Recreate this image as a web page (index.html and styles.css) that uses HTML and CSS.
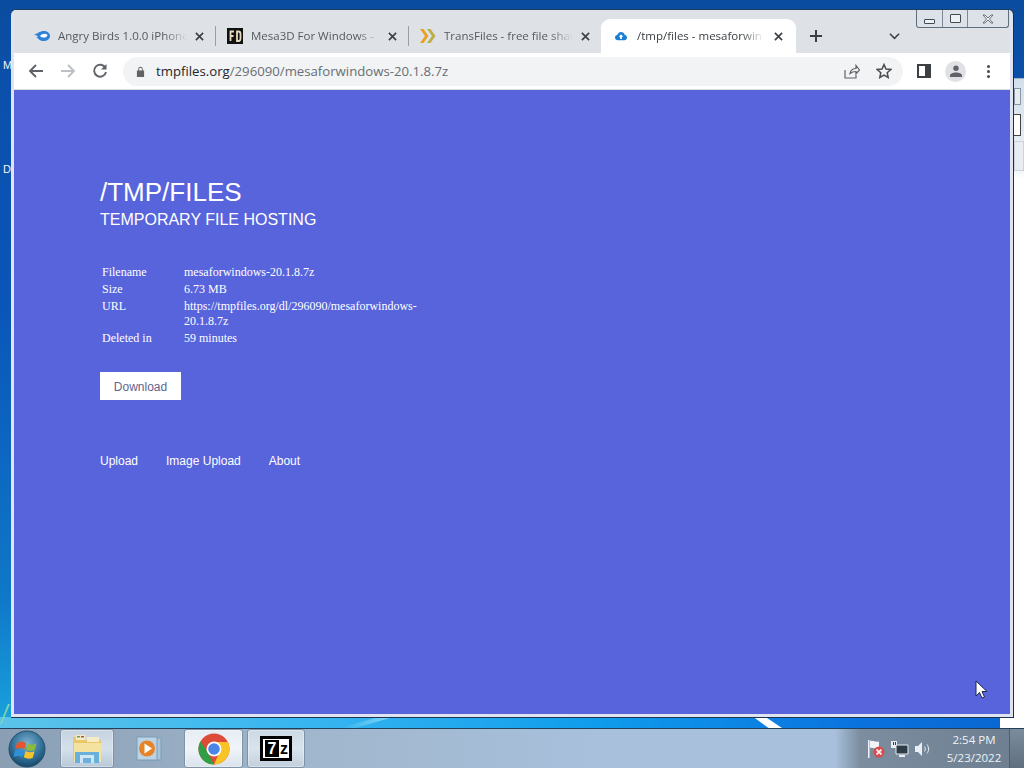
FILE: index.html
```html
<!DOCTYPE html>
<html lang="en">
<head>
<meta charset="utf-8">
<title>/tmp/files - mesaforwindows-20.1.8.7z</title>
<link rel="stylesheet" href="styles.css">
</head>
<body>
<div class="desktop">
  <span class="desk-label label-m">M</span>
  <span class="desk-label label-d">D</span>
  <div class="back-window">
    <span class="back-field back-a"></span>
    <span class="back-field back-b"></span>
    <span class="back-field back-c"></span>
  </div>
  <div class="glow"></div>
  <div class="streak-left"></div>
  <div class="streak"></div>

  <main class="window">
    <div class="tabstrip">
      <div class="tab tab-first">
        <svg class="favicon" viewBox="0 0 16 16"><path fill="#2f80d8" d="M0 6.200c1.800-.1 3-.6 4.500-1.600C6 3.500 8 3 10 3c3.500 0 6 2.200 6 5s-2.500 5-6 5c-2.500 0-4.500-.8-5.800-2.300C3.500 10 3 9.500 2.200 9.300 3 9 3.500 8.800 4 8.400 2.800 7.600 1.500 6.800 0 6.200z"/><path fill="#fff" d="M6 8c1.200-1.500 2.700-2.200 4.500-2.200 1.300 0 2.300.4 3 1.200-.2 1.500-1.500 2.600-3.500 2.600C8.500 9.600 7 9 6 8z"/></svg>
        <span class="tab-title">Angry Birds 1.0.0 iPhone</span>
        <svg class="tab-close" viewBox="0 0 10 10"><path d="M1 1l8 8M9 1l-8 8"/></svg>
      </div>
      <i class="tab-sep"></i>
      <div class="tab">
        <svg class="favicon" viewBox="0 0 16 16"><rect width="16" height="16" fill="#111"/><path fill="none" stroke="#e8dcc0" stroke-width="1.800" d="M3.500 13V3.500H7M3.500 8H6.500M10 3.500v9.500h1.500c1.500 0 2-1 2-2.500v-4.500c0-1.500-.5-2.500-2-2.500z"/></svg>
        <span class="tab-title">Mesa3D For Windows -</span>
        <svg class="tab-close" viewBox="0 0 10 10"><path d="M1 1l8 8M9 1l-8 8"/></svg>
      </div>
      <i class="tab-sep"></i>
      <div class="tab">
        <svg class="favicon" viewBox="0 0 16 16"><path fill="#e8a020" d="M0 1h3.500l5 7-5 7H0l5-7z"/><path fill="#b9b04a" d="M7 1h3.500l5 7-5 7H7l5-7z"/></svg>
        <span class="tab-title">TransFiles - free file shar</span>
        <svg class="tab-close" viewBox="0 0 10 10"><path d="M1 1l8 8M9 1l-8 8"/></svg>
      </div>
      <div class="tab tab-active">
        <svg class="favicon favicon-cloud" viewBox="0 0 16 12"><path fill="#1a7fd4" d="M4 11.500C1.500 11.500 0 10 0 8c0-1.800 1.300-3 3-3.200C3.600 2.300 5.700.5 8 .5c2.600 0 4.500 1.700 5 4.200 1.700.2 3 1.500 3 3.300 0 2-1.500 3.500-3.500 3.500z"/><path fill="#fff" d="M8 3.500l3 3.500H9.200v3H6.800V7H5z"/></svg>
        <span class="tab-title">/tmp/files - mesaforwin</span>
        <svg class="tab-close" viewBox="0 0 10 10"><path d="M1 1l8 8M9 1l-8 8"/></svg>
      </div>
      <svg class="new-tab" viewBox="0 0 12 12"><path d="M6 0v12M0 6h12"/></svg>
      <svg class="tab-menu" viewBox="0 0 12 8"><path d="M1 1.500l5 5 5-5"/></svg>
      <div class="win-controls">
        <span class="win-btn win-min"><i></i></span>
        <span class="win-btn win-max"><i></i></span>
        <span class="win-btn win-close">
          <svg viewBox="0 0 14 10"><path d="M2 1h2l3 3 3-3h2L8.500 5 12 9h-2L7 6 4 9H2l3.500-4z"/></svg>
        </span>
      </div>
    </div>

    <div class="toolbar">
      <svg class="nav-icon" viewBox="0 0 16 16"><path d="M15 8H2M8 2L2 8l6 6"/></svg>
      <svg class="nav-icon nav-off" viewBox="0 0 16 16"><path d="M1 8h13M8 2l6 6-6 6"/></svg>
      <svg class="nav-icon nav-reload" viewBox="0 0 16 16"><path d="M13.500 5A6 6 0 1 0 14 9"/><path class="solid" d="M14.500 1v5.500H9z"/></svg>
      <div class="omnibox">
        <svg class="lock" viewBox="0 0 10 12"><path d="M1 5h8v7H1z M2.500 5V3.200a2.500 2.500 0 0 1 5 0V5H6.500V3.200a1.500 1.500 0 0 0-3 0V5z"/></svg>
        <span class="url"><b>tmpfiles.org</b>/296090/mesaforwindows-20.1.8.7z</span>
        <svg class="omni-icon share" viewBox="0 0 16 15"><path d="M1 6v8h11v-3M6 9.500c.5-3 3-5 6-5V1.500L15.500 6 12 10V7.500c-2.500 0-4.500.7-6 2z"/></svg>
        <svg class="omni-icon star" viewBox="0 0 16 16"><path d="M8 1.500l2 4.500 4.800.5-3.600 3.200 1 4.800L8 12.100l-4.200 2.400 1-4.800L1.200 6.500 6 6z"/></svg>
      </div>
      <svg class="side-panel" viewBox="0 0 14 14"><path fill-rule="evenodd" d="M0 0h14v14H0zM2 2v10h6V2z"/></svg>
      <span class="avatar">
        <svg viewBox="0 0 12 12"><circle cx="6" cy="3.300" r="2.700"/><path d="M0 12v-1.500C0 8.500 3 7.500 6 7.500s6 1 6 3V12z"/></svg>
      </span>
      <span class="kebab"><i></i><i></i><i></i></span>
    </div>

    <div class="page">
      <h1 class="site-title">/TMP/FILES</h1>
      <h2 class="site-sub">TEMPORARY FILE HOSTING</h2>
      <table class="info">
        <tr><th>Filename</th><td>mesaforwindows-20.1.8.7z</td></tr>
        <tr><th>Size</th><td>6.73 MB</td></tr>
        <tr><th>URL</th><td>https://tmpfiles.org/dl/296090/mesaforwindows-20.1.8.7z</td></tr>
        <tr><th>Deleted in</th><td>59 minutes</td></tr>
      </table>
      <a class="download">Download</a>
      <nav class="links"><a>Upload</a><a>Image Upload</a><a>About</a></nav>
    </div>
  </main>

  <footer class="taskbar">
    <svg class="start" viewBox="0 0 38 38">
      <defs>
        <radialGradient id="orb" cx="50%" cy="35%" r="70%"><stop offset="0" stop-color="#7fb0d0"/><stop offset=".6" stop-color="#2f6f96"/><stop offset="1" stop-color="#123f60"/></radialGradient>
      </defs>
      <circle cx="19" cy="19" r="18" fill="url(#orb)" stroke="#24506c"/>
      <path fill="#e2572b" d="M9 13c3-2 6-2 9 0l-1.500 6c-3-1.500-6-1.500-9.500 0z"/>
      <path fill="#8bbb3a" d="M19.500 13.500c3 1.500 6 1.500 9 0l-1.800 6.500c-3 1.300-6 1.200-8.700-.5z"/>
      <path fill="#2f8fd8" d="M7 20.500c3-1.500 6-1.500 9 0l-1.500 6.500c-3-1.500-6-1.500-9 0z"/>
      <path fill="#f4c430" d="M17.500 21c3 1.500 6 1.500 9 .3l-1.700 6.500c-3 1.300-6 1.200-9-.5z"/>
    </svg>
    <div class="task-btn task-folder">
      <svg viewBox="0 0 32 30"><path fill="#e8c868" d="M2 3h10l2 3h16v22H2z"/><path fill="#f4e3a0" d="M3 9h27v19H3z"/><rect x="5" y="1" width="9" height="5" fill="#f5ecc6"/><rect x="16" y="3" width="12" height="5" fill="#f5ecc6"/><rect x="6" y="2" width="3" height="1.500" fill="#66a050"/><rect x="10" y="2" width="3" height="1.500" fill="#b05040"/><path fill="#6ab0dc" d="M4 18h24v11H4z"/><path fill="#cfe6f4" d="M9 21h14v8h-3v-5h-8v5H9z"/></svg>
    </div>
    <div class="task-plain">
      <svg viewBox="0 0 28 28"><rect x="6" y="3" width="20" height="22" fill="#a9c4da" stroke="#7d9db8"/><rect x="2" y="2" width="20" height="23" fill="#bcd3e6" stroke="#7d9db8"/><circle cx="12" cy="13.500" r="8" fill="#e88428"/><path fill="#fff" d="M9.500 8.500l7.500 5-7.500 5z"/></svg>
    </div>
    <div class="task-btn task-chrome">
      <svg viewBox="0 0 32 32"><circle cx="16" cy="16" r="15.500" fill="#dd4b39"/><path fill="#2f9e44" d="M16 31.500A15.500 15.500 0 0 1 2.600 8.200L10 20l6 11.500z"/><path fill="#f7c325" d="M16 31.500A15.500 15.500 0 0 0 29.900 9H16l5 11z"/><circle cx="16" cy="16" r="7.500" fill="#fff"/><circle cx="16" cy="16" r="5.800" fill="#4a86e8"/></svg>
    </div>
    <div class="task-btn task-7z"><span class="sz"><b>7</b><em>z</em></span></div>
    <div class="tray">
      <svg class="tray-flag" viewBox="0 0 18 18"><path fill="#f0f4f8" d="M1 0h1.500v18H1zM3 1c3-1 5 1.500 9 .5v7c-4 1-6-1.500-9-.5z"/><circle cx="12" cy="12" r="5.500" fill="#d84a4a"/><path stroke="#fbe8e8" stroke-width="1.800" d="M9.500 9.500l5 5M14.500 9.500l-5 5"/></svg>
      <svg class="tray-net" viewBox="0 0 18 18"><path fill="#e8eef4" d="M0 1h6v7H0z"/><path fill="#2e3c48" d="M2 2h1v3H2zM4 2h1v3H4z"/><path fill="#2e3c48" stroke="#e8eef4" d="M5 5h12v9H5z"/><path fill="#e8eef4" d="M8 15h6v2H8z"/></svg>
      <svg class="tray-vol" viewBox="0 0 18 18"><path fill="#e8eef4" d="M1 6h3l4-4v14l-4-4H1z"/><path fill="none" stroke="#e8eef4" d="M10.500 6.500c1 1.500 1 3.500 0 5M13 4.500c2 2.500 2 6.500 0 9"/></svg>
      <div class="clock"><span>2:54 PM</span><span>5/23/2022</span></div>
      <div class="show-desktop"></div>
    </div>
  </footer>

  <svg class="cursor" viewBox="0 0 13 19"><path d="M1 1v15l3.500-3.500 2.500 5.500 2.500-1-2.500-5.500H12z"/></svg>
</div>
</body>
</html>
```

FILE: styles.css
```css
* { box-sizing: border-box; }
html, body { margin: 0; padding: 0; }
body { width: 1024px; height: 768px; overflow: hidden; background: #0a4fa8; }

.desktop {
  position: relative;
  width: 1024px;
  height: 768px;
  overflow: hidden;
  background:
    linear-gradient(90deg, #5cc4ea 0, #38b6f0 300px, #0f9cec 600px, #0a72de 860px, #0a66d0 1024px) 0 717px / 100% 11px no-repeat,
    linear-gradient(180deg, #0a4c9e 0, #0b50ac 90px, #0a55b8 300px, #0f78c8 600px, #19a0dc 717px);
}
.desk-label {
  position: absolute;
  left: 3px;
  font: 11px "Liberation Sans", sans-serif;
  color: #f2f6fb;
}
.label-m { top: 59px; }
.label-d { top: 163px; }

.back-window {
  position: absolute;
  left: 1000px;
  top: 78px;
  width: 24px;
  height: 650px;
  background: linear-gradient(180deg, #d2dfeb 0, #eef3f8 90px, #fff 100px);
  border-top: 1px solid #9fb3c6;
}
.back-field { position: absolute; display: block; right: 0; }
.back-a { top: 9px; left: 14px; width: 7px; height: 17px; background: #e6ebf0; border: 1px solid #8a97a4; }
.back-b { top: 35px; left: 13px; width: 8px; height: 22px; background: #fff; border: 1px solid #444; }
.back-c { top: 62px; left: 14px; width: 10px; height: 30px; background: #e9edf1; border: 1px solid #ccd3da; }

.glow {
  position: absolute;
  left: 340px;
  top: 718px;
  width: 50px;
  height: 10px;
  background: linear-gradient(90deg, transparent, #7fd4f4);
  clip-path: polygon(0 100%, 70% 0, 100% 0, 30% 100%);
}
.streak-left {
  position: absolute;
  left: 0;
  top: 704px;
  width: 10px;
  height: 20px;
  background: #7fd8a8;
  clip-path: polygon(80% 0, 100% 0, 15% 100%, 0 100%);
}
.streak {
  position: absolute;
  left: 752px;
  top: 717px;
  width: 30px;
  height: 11px;
  background: #fff;
  clip-path: polygon(5% 0, 45% 0, 100% 100%, 55% 100%);
}

.window {
  position: absolute;
  left: 11px;
  top: 10px;
  width: 1003px;
  height: 708px;
  display: flex;
  flex-direction: column;
  padding: 0 3px 3px;
  background: #dfe4f0;
  border-radius: 5px 5px 0 0;
  border-right: 1px solid #1c2e3f;
  border-bottom: 1px solid #1c3550;
  box-shadow: 0 -1px 0 #1d3d63;
}

.tabstrip {
  position: relative;
  height: 43px;
  flex: none;
  display: flex;
  align-items: flex-end;
  padding-top: 9px;
  background: #dee1e6;
  font: 11.500px "Open Sans", "Noto Sans", sans-serif;
}
.tab {
  position: relative;
  width: 192px;
  height: 34px;
  flex: none;
  display: flex;
  align-items: center;
  gap: 8px;
  padding: 0 11px 0 11px;
  color: #555a60;
}
.tab-first { width: 201px; padding-left: 20px; }
.tab-title {
  flex: 1;
  min-width: 0;
  margin-top: -2px;
  white-space: nowrap;
  -webkit-mask-image: linear-gradient(90deg, #000 82%, transparent 100%);
  mask-image: linear-gradient(90deg, #000 82%, transparent 100%);
}
.favicon { width: 16px; height: 16px; flex: none; }
.favicon-cloud { height: 10px; width: 12px; margin-left: 0; }
.tab-close { width: 9px; height: 9px; flex: none; }
.tab-close path { stroke: #3c4043; stroke-width: 1.800; fill: none; }
.tab-sep { width: 1px; height: 20px; margin-bottom: 7px; background: #9a9da2; flex: none; }
.tab-active {
  width: 195px;
  padding: 0 13px 0 14px;
  gap: 10px;
  background: #fff;
  border-radius: 9px 9px 0 0;
  color: #3c4043;
}
.new-tab { width: 12px; height: 12px; margin: 0 0 11px 14px; flex: none; }
.new-tab path { stroke: #3c4043; stroke-width: 2; fill: none; }
.tab-menu { width: 11px; height: 8px; margin: 0 0 13px 67px; flex: none; }
.tab-menu path { stroke: #3c4043; stroke-width: 1.700; fill: none; }

.win-controls {
  position: absolute;
  right: 1px;
  top: 0;
  width: 93px;
  height: 18px;
  display: flex;
  border: 1px solid #5f6e7c;
  border-top: 0;
  border-radius: 0 0 3px 3px;
  background: #dde2e8;
}
.win-btn { flex: 1; display: flex; align-items: center; justify-content: center; border-left: 1px solid #7d8a96; }
.win-btn:first-child { border-left: 0; }
.win-max, .win-min { flex: 0 0 25px; }
.win-min i { width: 11px; height: 5px; margin-top: 6px; border: 1px solid #3f4a55; border-radius: 1px; background: #eef1f4; }
.win-max i { width: 11px; height: 9px; border: 1.500px solid #3f4a55; border-radius: 1px; background: #eef1f4; }
.win-close svg { width: 14px; height: 10px; }
.win-close path { fill: #eef1f4; stroke: #4a5560; stroke-width: .8; }

.toolbar {
  height: 37px;
  flex: none;
  display: flex;
  align-items: center;
  padding: 0 0 0 14px;
  background: #fff;
  border-bottom: 1px solid #d9dce0;
}
.nav-icon { width: 16px; height: 16px; flex: none; margin-right: 16px; }
.nav-icon path { fill: none; stroke: #5f6368; stroke-width: 1.900; }
.nav-icon .solid { fill: #5f6368; stroke: none; }
.nav-off path { stroke: #bcbfc3; }
.nav-reload { margin-right: 15px; }
.omnibox {
  width: 780px;
  height: 29px;
  flex: none;
  display: flex;
  align-items: center;
  padding: 0 11px 0 13px;
  border-radius: 15px;
  background: #f1f3f4;
  font: 13.200px "Open Sans", "Noto Sans", sans-serif;
}
.lock { width: 9px; height: 11px; flex: none; margin-right: 11px; }
.lock path { fill: #5f6368; }
.url { flex: 1; color: #6a6e73; white-space: nowrap; }
.url b { font-weight: 400; color: #24272a; }
.omni-icon { flex: none; }
.omni-icon path { fill: none; stroke: #5f6368; stroke-width: 1.200; }
.share { width: 16px; height: 15px; margin-right: 16px; }
.star { width: 16px; height: 16px; }
.star path { stroke: #4a4e52; stroke-width: 1.500; }
.side-panel { width: 14px; height: 14px; flex: none; margin-left: 14px; }
.side-panel path { fill: #3c4043; }
.avatar {
  width: 21px;
  height: 21px;
  flex: none;
  margin-left: 14px;
  display: flex;
  align-items: center;
  justify-content: center;
  border-radius: 50%;
  background: #dfe1e5;
}
.avatar svg { width: 12px; height: 12px; }
.avatar path, .avatar circle { fill: #5f6368; }
.kebab { display: flex; flex-direction: column; gap: 2px; flex: none; margin-left: 21px; }
.kebab i { width: 3px; height: 3px; border-radius: 50%; background: #45494d; }

.page {
  flex: 1;
  min-height: 0;
  padding: 87px 0 0 86px;
  background: #5864dc;
  color: #fff;
  font-family: "Liberation Sans", Arial, sans-serif;
}
.site-title { margin: 0; font-size: 26px; line-height: 30px; font-weight: 400; }
.site-sub { margin: 1px 0 32px; font-size: 16px; line-height: 24px; font-weight: 400; }
.info {
  width: 328px;
  border-collapse: collapse;
  font: 12px/15px "Liberation Serif", "Times New Roman", serif;
}
.info th, .info td { padding: 1px 2px; vertical-align: top; text-align: left; font-weight: 400; }
.info th { width: 82px; }
.download {
  display: block;
  width: 81px;
  height: 28px;
  margin-top: 25px;
  background: #fff;
  color: #63648e;
  font-size: 12px;
  line-height: 30px;
  text-align: center;
}
.links { display: flex; gap: 28px; margin-top: 53px; font-size: 12px; line-height: 16px; }

.taskbar {
  position: absolute;
  left: 0;
  right: 0;
  bottom: 0;
  height: 40px;
  display: flex;
  align-items: stretch;
  border-top: 1px solid #20405c;
  background: linear-gradient(90deg, #8a9fb4 0, #a0b6cc 300px, #a8c0dc 600px, #a8c0dc 835px, #7b8d9f 860px, #6e8092 1000px);
}
.start { width: 38px; height: 38px; margin: 0 14px 0 8px; flex: none; align-self: center; }
.task-btn {
  width: 59px;
  flex: none;
  display: flex;
  align-items: center;
  justify-content: center;
  border: 1px solid #7f93a6;
  border-radius: 3px;
  background: linear-gradient(180deg, #c5d3e0 0, #d5e0ea 50%, #b9c9d8 100%);
  box-shadow: inset 0 0 0 1px rgba(255,255,255,.35);
}
.task-folder { width: 54px; }
.task-folder svg { width: 32px; height: 30px; }
.task-plain { width: 70px; flex: none; display: flex; align-items: center; justify-content: center; }
.task-plain svg { width: 28px; height: 28px; }
.task-chrome { margin-right: 4px; background: linear-gradient(180deg, #e6edf3 0, #f0f4f8 50%, #d9e3ec 100%); }
.task-chrome svg { width: 32px; height: 32px; }
.task-7z { width: 58px; background: linear-gradient(180deg, #cdd9e4 0, #d9e3ec 50%, #c2d0dd 100%); }
.sz {
  width: 32px;
  height: 25px;
  display: flex;
  align-items: center;
  padding-left: 2px;
  background: #fff;
  border: 3px solid #000;
  font: 700 16px/1 "Liberation Sans", sans-serif;
  color: #000;
}
.sz b { width: 14px; height: 17px; background: #000; color: #fff; text-align: center; line-height: 17px; }
.sz em { font-style: normal; margin-left: 1px; }

.tray { flex: 1; display: flex; align-items: center; justify-content: flex-end; }
.tray-flag { width: 18px; height: 18px; margin-right: 6px; }
.tray-net { width: 18px; height: 18px; margin-right: 5px; }
.tray-vol { width: 18px; height: 18px; margin-right: 7px; }
.clock {
  width: 70px;
  display: flex;
  flex-direction: column;
  align-items: center;
  color: #eef3f8;
  font: 11.500px/18px "Open Sans", "Noto Sans", sans-serif;
}
.show-desktop {
  width: 15px;
  align-self: stretch;
  border-left: 1px solid #4f5f6e;
  background: linear-gradient(180deg, #7b8c9c, #5f6f7f);
}
.cursor { position: absolute; left: 975px; top: 680px; width: 13px; height: 19px; }
.cursor path { fill: #fff; stroke: #1c2450; stroke-width: 1; }
```
